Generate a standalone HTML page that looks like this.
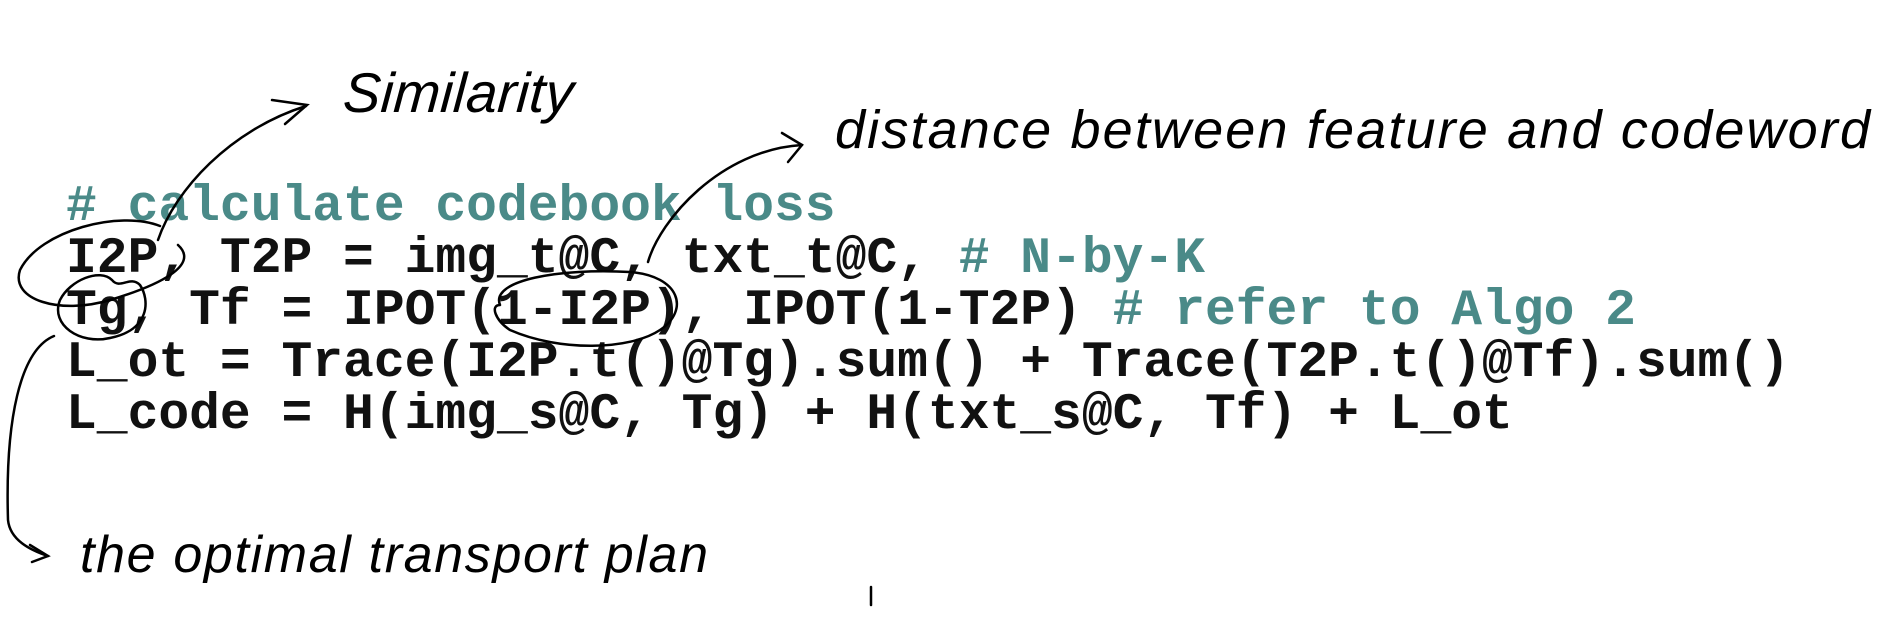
<!DOCTYPE html>
<html><head><meta charset="utf-8"><style>
html,body{margin:0;padding:0;background:#fff;}
body{width:1888px;height:632px;position:relative;overflow:hidden;}
.code{position:absolute;left:66px;top:181px;font-family:"Liberation Mono",monospace;font-weight:bold;font-size:51.3px;line-height:52px;color:#111;white-space:pre;}
.c{color:#4a8a88;}
svg{position:absolute;left:0;top:0;}
.hw{font-family:"Liberation Sans",sans-serif;font-style:italic;fill:#000;}
</style></head><body>
<div class="code"><span class="c"># calculate codebook loss</span>
I2P, T2P = img_t@C, txt_t@C, <span class="c"># N-by-K</span>
Tg, Tf = IPOT(1-I2P), IPOT(1-T2P) <span class="c"># refer to Algo 2</span>
L_ot = Trace(I2P.t()@Tg).sum() + Trace(T2P.t()@Tf).sum()
L_code = H(img_s@C, Tg) + H(txt_s@C, Tf) + L_ot</div>
<svg width="1888" height="632" viewBox="0 0 1888 632" fill="none" stroke="#000" stroke-width="2.5" stroke-linecap="round">
<text class="hw" x="350" y="112" font-size="56" stroke="none" textLength="230" transform="skewX(-4)">Similarity</text>
<text class="hw" x="835" y="148" font-size="54" stroke="none" textLength="1035">distance between feature and codeword</text>
<text class="hw" x="80" y="572" font-size="52" stroke="none" textLength="628">the optimal transport plan</text>
<path d="M158 240 C175 190 230 130 306 106"/>
<path d="M272 100 L307 105 L285 124"/>
<path d="M160 226 C120 210 40 230 20 270 C10 300 60 315 110 300 C160 285 200 265 178 245"/>
<path d="M60 300 C50 325 80 345 110 338 C150 330 150 300 140 285 C130 275 120 290 112 280 C100 268 70 280 60 300"/>
<path d="M54 336 C20 350 5 420 8 520 C10 540 30 550 48 556"/>
<path d="M30 545 L48 556 L32 562"/>
<path d="M500 305 C490 280 560 268 630 272 C680 276 690 310 660 330 C630 350 560 352 510 330 C495 320 490 305 500 305"/>
<path d="M648 262 C660 220 720 150 802 145"/>
<path d="M782 133 L802 145 L788 162"/>
<path d="M871 587 L871 605"/>
</svg>
</body></html>
